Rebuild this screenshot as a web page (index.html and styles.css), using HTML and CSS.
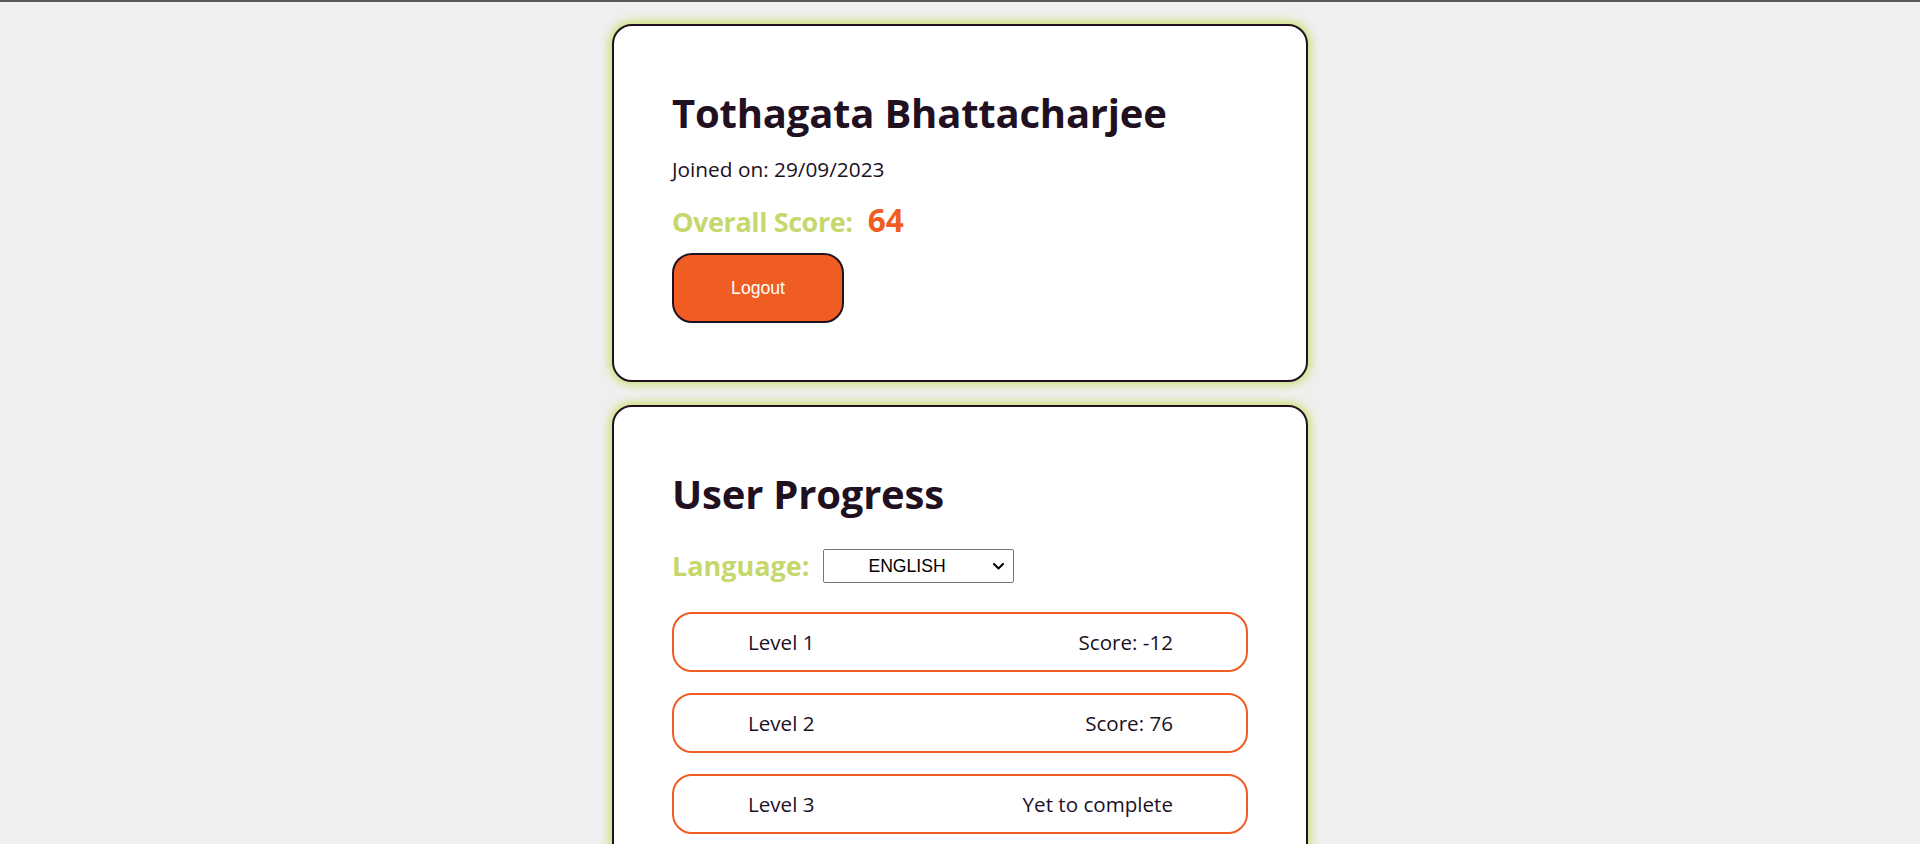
FILE: index.html
```html
<!DOCTYPE html>
<html lang="en">
<head>
<meta charset="utf-8">
<title>Profile</title>
<link rel="stylesheet" href="styles.css">
</head>
<body>
<div class="topbar"></div>
<main class="page">
  <section class="card">
    <h1 class="card-title">Tothagata Bhattacharjee</h1>
    <p class="joined">Joined on: 29/09/2023</p>
    <p class="overall"><span class="overall-label">Overall Score:</span> <span class="overall-value">64</span></p>
    <button class="logout" type="button">Logout</button>
  </section>
  <section class="card card-progress">
    <h1 class="card-title">User Progress</h1>
    <div class="lang-row">
      <label class="lang-label" for="lang">Language:</label>
      <div class="select-wrap">
        <select class="lang-select" id="lang">
          <option>ENGLISH</option>
          <option>HINDI</option>
          <option>BENGALI</option>
        </select>
        <svg class="select-arrow" width="11" height="7" viewBox="0 0 11 7" aria-hidden="true">
          <path d="M1 1 L5.5 5.5 L10 1" fill="none" stroke="#000" stroke-width="2" stroke-linecap="round" stroke-linejoin="round"/>
        </svg>
      </div>
    </div>
    <ul class="levels">
      <li class="level"><span>Level 1</span><span>Score: -12</span></li>
      <li class="level"><span>Level 2</span><span>Score: 76</span></li>
      <li class="level"><span>Level 3</span><span>Yet to complete</span></li>
    </ul>
  </section>
</main>
</body>
</html>
```
FILE: styles.css
```css
* { box-sizing: border-box; }

html, body {
  margin: 0;
  padding: 0;
  background: #efefef;
  font-family: "Open Sans", "Noto Sans", sans-serif;
  color: #21101f;
}

.topbar {
  height: 2px;
  background: #5a5a5e;
}

.page {
  display: flex;
  flex-direction: column;
  align-items: center;
  gap: 23px;
  padding-top: 22px;
}

.card {
  width: 696px;
  background: #ffffff;
  border: 2px solid #21101f;
  border-radius: 20px;
  box-shadow: 0 0 8px 3px #cddf78;
  padding: 63px 58px 57px 58px;
}

.card-title {
  margin: 0;
  font-size: 40px;
  line-height: 48px;
  font-weight: 700;
  letter-spacing: -0.2px;
  color: #21101f;
}

.joined {
  margin: 18px 0 0 0;
  font-size: 20.8px;
  line-height: 28px;
}

.overall {
  margin: 19px 0 0 0;
  font-size: 27px;
  line-height: 36px;
  font-weight: 700;
}

.overall-label {
  color: #c5d86d;
  letter-spacing: -0.4px;
}

.overall-value {
  color: #f05d23;
  font-size: 31.5px;
  margin-left: 8px;
}

.logout {
  display: block;
  margin-top: 13px;
  width: 172px;
  height: 70px;
  background: #f05d23;
  color: #ffffff;
  border: 2px solid #21101f;
  border-radius: 20px;
  font-family: "Liberation Sans", Arial, sans-serif;
  font-size: 17.6px;
  cursor: pointer;
}

.lang-row {
  display: flex;
  align-items: center;
  gap: 13px;
  margin-top: 31px;
  height: 34px;
}

.lang-label {
  color: #c5d86d;
  font-size: 27px;
  line-height: 34px;
  font-weight: 700;
}

.select-wrap {
  position: relative;
  width: 191px;
  height: 34px;
}

.lang-select {
  appearance: none;
  -webkit-appearance: none;
  width: 100%;
  height: 100%;
  margin: 0;
  padding: 0 22px 0 0;
  border: 1px solid #767676;
  border-radius: 2px;
  background: #ffffff;
  color: #000000;
  font-family: "Liberation Sans", Arial, sans-serif;
  font-size: 17.6px;
  text-align: center;
  text-align-last: center;
}

.select-arrow {
  position: absolute;
  right: 10px;
  top: 14px;
  pointer-events: none;
}

.levels {
  list-style: none;
  margin: 29px 0 0 0;
  padding: 0;
  display: flex;
  flex-direction: column;
  gap: 21px;
}

.level {
  height: 60px;
  border: 2px solid #f05d23;
  border-radius: 20px;
  display: flex;
  align-items: center;
  justify-content: space-between;
  padding: 0 73px 0 74px;
  font-size: 20.6px;
  line-height: 28px;
  color: #21101f;
}
```
